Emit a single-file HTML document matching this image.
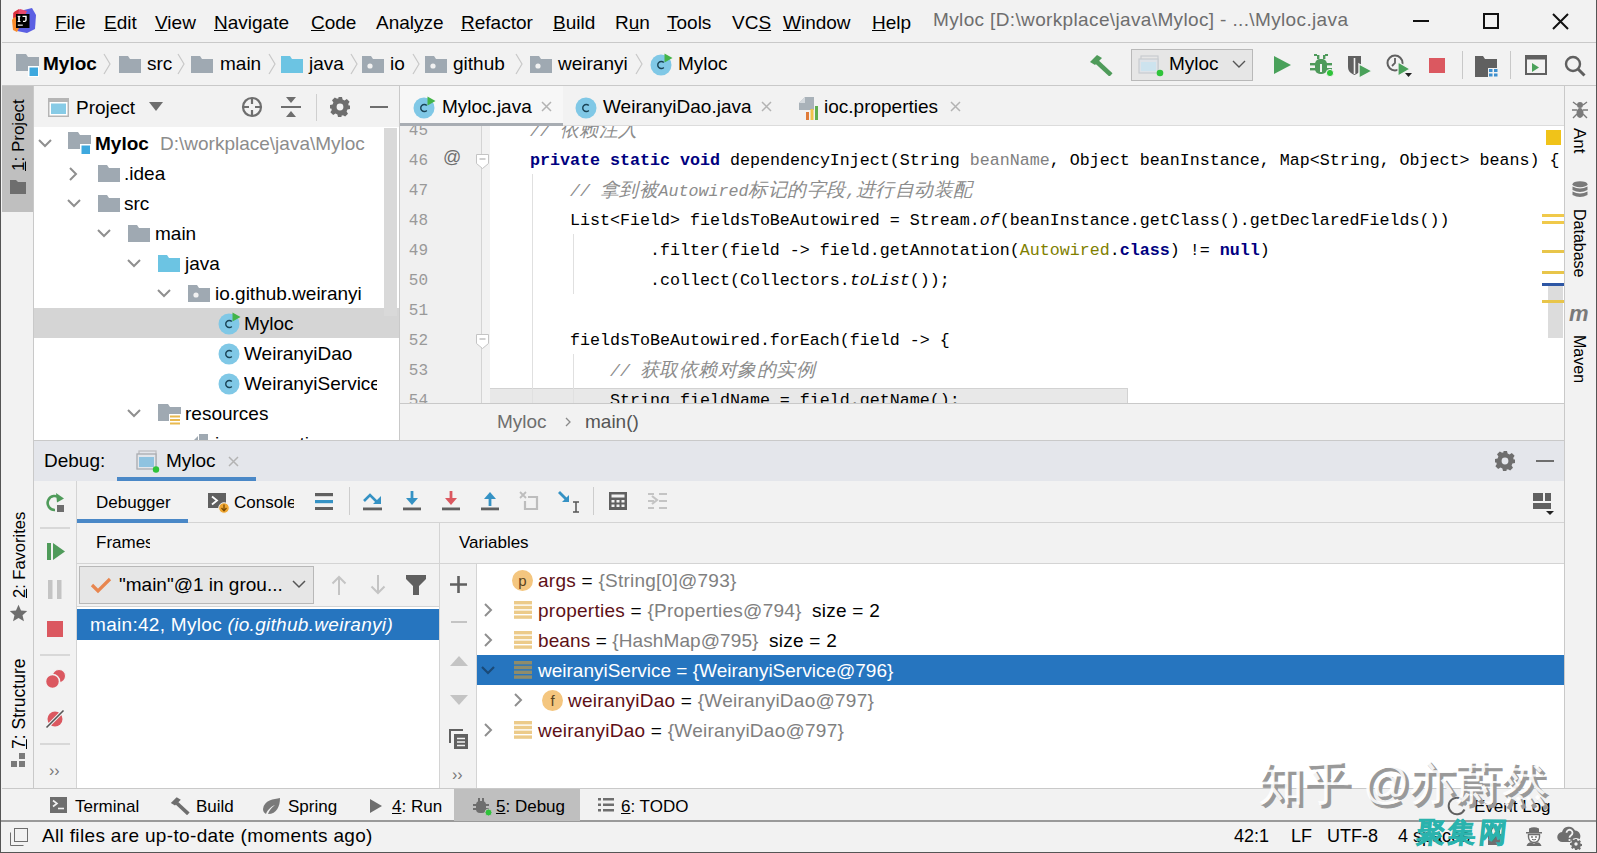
<!DOCTYPE html>
<html><head><meta charset="utf-8">
<style>
*{margin:0;padding:0;box-sizing:border-box}
html,body{width:1597px;height:853px;overflow:hidden;background:#f2f2f2}
body{position:relative;font-family:"Liberation Sans",sans-serif;font-size:19px;color:#000}
.a{position:absolute}
.t{position:absolute;white-space:pre;line-height:22px;font-size:19px}
.m{font-family:"Liberation Mono",monospace;font-size:16.67px;line-height:22px;white-space:pre;position:absolute}
.b{position:absolute;background:#c9c9c9}
u{text-decoration:underline;text-underline-offset:1px;text-decoration-thickness:1px}
</style></head><body>

<svg width="0" height="0" style="position:absolute">
<defs>
<symbol id="fold" viewBox="0 0 22 18"><path d="M0 1h9l2 3h11v14H0z" fill="#9fa9b2"/></symbol>
<symbol id="foldj" viewBox="0 0 22 18"><path d="M0 1h9l2 3h11v14H0z" fill="#6cc4e3"/></symbol>
<symbol id="pkg" viewBox="0 0 22 18"><path d="M0 1h9l2 3h11v14H0z" fill="#9fa9b2"/><circle cx="8" cy="11" r="2.6" fill="#f2f2f2"/></symbol>
<symbol id="modf" viewBox="0 0 24 24"><path d="M0 1h10l2 3h11v14H0z" fill="#9fa9b2"/><rect x="12" y="13" width="11" height="11" fill="#fff"/><rect x="13.5" y="14.5" width="8.5" height="8.5" fill="#3ea8de"/></symbol>
<symbol id="cls" viewBox="0 0 22 22"><circle cx="11" cy="11" r="10.5" fill="#80c8e6"/><path d="M13.8 8.6a3.5 3.5 0 1 0 0 4.8" fill="none" stroke="#1a4456" stroke-width="1.4"/></symbol>
<symbol id="clsr" viewBox="0 0 24 24"><circle cx="11" cy="13" r="10.5" fill="#80c8e6"/><path d="M13.8 10.6a3.5 3.5 0 1 0 0 4.8" fill="none" stroke="#1a4456" stroke-width="1.4"/><path d="M14.5 1.5l8 4.5-8 4.5z" fill="#44b449"/></symbol>
<symbol id="chev" viewBox="0 0 8 22"><path d="M1 1l6 10-6 10" fill="none" stroke="#c8c8c8" stroke-width="1.2"/></symbol>
</defs></svg>
<!-- window left border -->
<div class="a" style="left:0;top:0;width:1px;height:853px;background:#555"></div>

<!-- ===== MENU BAR ===== -->
<div id="menubar" class="a" style="left:1px;top:0;width:1595px;height:42px;background:#f2f2f2"></div>
<div class="b" style="left:2px;top:42px;width:1595px;height:1px"></div>

<!-- IJ logo -->
<svg class="a" style="left:11px;top:8px" width="26" height="26" viewBox="0 0 26 26">
<polygon points="13,2 21,0 25,7 24,21 16,25 6,23 9,10" fill="#5b5fe3"/>
<polygon points="2,5 9,1 16,3 11,14 3,15" fill="#e84a6f"/>
<polygon points="1,12 4,8 8,20 6,24 2,22" fill="#f98b2a"/>
<polygon points="3,4 8,1 7,8 2,10" fill="#d8313b"/>
<rect x="5" y="6" width="13.5" height="14" fill="#000"/>
<rect x="7.2" y="8" width="1.6" height="5.5" fill="#fff"/><rect x="6.6" y="7.8" width="2.8" height="1" fill="#fff"/><rect x="6.6" y="13" width="2.8" height="1" fill="#fff"/>
<path d="M11.5 7.8h4.2v4.3a1.8 1.8 0 0 1-1.8 1.8h-1.9v-1.2h1.7a.6.6 0 0 0 .6-.6v-3.1h-2.8z" fill="#fff"/>
<rect x="6.8" y="16.6" width="5" height="1.1" fill="#fff"/>
</svg>
<div class="t" style="left:55px;top:12px"><u>F</u>ile</div>
<div class="t" style="left:104px;top:12px"><u>E</u>dit</div>
<div class="t" style="left:155px;top:12px"><u>V</u>iew</div>
<div class="t" style="left:214px;top:12px"><u>N</u>avigate</div>
<div class="t" style="left:311px;top:12px"><u>C</u>ode</div>
<div class="t" style="left:376px;top:12px">Anal<u>y</u>ze</div>
<div class="t" style="left:461px;top:12px"><u>R</u>efactor</div>
<div class="t" style="left:553px;top:12px"><u>B</u>uild</div>
<div class="t" style="left:615px;top:12px">R<u>u</u>n</div>
<div class="t" style="left:667px;top:12px"><u>T</u>ools</div>
<div class="t" style="left:732px;top:12px">VC<u>S</u></div>
<div class="t" style="left:783px;top:12px"><u>W</u>indow</div>
<div class="t" style="left:872px;top:12px"><u>H</u>elp</div>
<div class="t" style="left:933px;top:9px;color:#6e6e6e;letter-spacing:0.36px">Myloc [D:\workplace\java\Myloc] - ...\Myloc.java</div>
<!-- window controls -->
<div class="a" style="left:1413px;top:20px;width:16px;height:2px;background:#111"></div>
<div class="a" style="left:1483px;top:13px;width:16px;height:16px;border:2px solid #111"></div>
<svg class="a" style="left:1552px;top:13px" width="17" height="17" viewBox="0 0 17 17"><path d="M1 1L16 16M16 1L1 16" stroke="#111" stroke-width="2"/></svg>


<!-- ===== NAV BAR ===== -->
<div id="navbar" class="a" style="left:2px;top:43px;width:1595px;height:43px;background:#f2f2f2"></div>
<div class="b" style="left:2px;top:85px;width:1595px;height:1px"></div>

<svg class="a" style="left:16px;top:53px" width="24" height="24"><use href="#modf"/></svg>
<div class="t" style="left:43px;top:53px;font-weight:bold">Myloc</div>
<svg class="a" style="left:103px;top:53px" width="8" height="22"><use href="#chev"/></svg>
<svg class="a" style="left:119px;top:55px" width="22" height="18"><use href="#fold"/></svg>
<div class="t" style="left:147px;top:53px">src</div>
<svg class="a" style="left:177px;top:53px" width="8" height="22"><use href="#chev"/></svg>
<svg class="a" style="left:191px;top:55px" width="22" height="18"><use href="#fold"/></svg>
<div class="t" style="left:220px;top:53px">main</div>
<svg class="a" style="left:268px;top:53px" width="8" height="22"><use href="#chev"/></svg>
<svg class="a" style="left:281px;top:55px" width="22" height="18"><use href="#foldj"/></svg>
<div class="t" style="left:309px;top:53px">java</div>
<svg class="a" style="left:350px;top:53px" width="8" height="22"><use href="#chev"/></svg>
<svg class="a" style="left:362px;top:55px" width="22" height="18"><use href="#pkg"/></svg>
<div class="t" style="left:390px;top:53px">io</div>
<svg class="a" style="left:412px;top:53px" width="8" height="22"><use href="#chev"/></svg>
<svg class="a" style="left:425px;top:55px" width="22" height="18"><use href="#pkg"/></svg>
<div class="t" style="left:453px;top:53px">github</div>
<svg class="a" style="left:515px;top:53px" width="8" height="22"><use href="#chev"/></svg>
<svg class="a" style="left:530px;top:55px" width="22" height="18"><use href="#pkg"/></svg>
<div class="t" style="left:558px;top:53px">weiranyi</div>
<svg class="a" style="left:635px;top:53px" width="8" height="22"><use href="#chev"/></svg>
<svg class="a" style="left:650px;top:52px" width="24" height="24"><use href="#clsr"/></svg>
<div class="t" style="left:678px;top:53px">Myloc</div>
<!-- toolbar right -->
<svg class="a" style="left:1089px;top:54px" width="24" height="22" viewBox="0 0 24 22"><path d="M1 8L8 1l5 3-7 7z" fill="#4f9b5a"/><path d="M8 8l14 13" stroke="#4f9b5a" stroke-width="4.5"/></svg>
<div class="a" style="left:1131px;top:49px;width:122px;height:32px;background:#e6e6e6;border:1px solid #b9b9b9"></div>
<svg class="a" style="left:1138px;top:55px" width="26" height="22" viewBox="0 0 26 22"><rect x="3" y="1" width="17" height="13" fill="none" stroke="#c9ccd0" stroke-width="1.2"/><rect x="1" y="4" width="19" height="14" fill="#dfe3e8" stroke="#c9ccd0" stroke-width="1.2"/><rect x="3" y="7" width="15" height="9" fill="#cde3ee"/><circle cx="22" cy="18" r="3.3" fill="#2fc33a"/></svg>
<div class="t" style="left:1169px;top:53px">Myloc</div>
<svg class="a" style="left:1232px;top:60px" width="14" height="9" viewBox="0 0 14 9"><path d="M1 1l6 6 6-6" fill="none" stroke="#555" stroke-width="1.4"/></svg>
<svg class="a" style="left:1274px;top:56px" width="17" height="18" viewBox="0 0 17 18"><path d="M0 0l17 9-17 9z" fill="#49a15a"/></svg>
<svg class="a" style="left:1309px;top:52px" width="26" height="26" viewBox="0 0 26 26"><g fill="#4e9a5b"><rect x="6" y="7" width="12" height="15" rx="5"/><rect x="1" y="11" width="22" height="2.4"/><rect x="1" y="16" width="22" height="2.4"/><rect x="8" y="3" width="2.4" height="4"/><rect x="14" y="3" width="2.4" height="4"/><rect x="5" y="2" width="3" height="2"/><rect x="16" y="2" width="3" height="2"/></g><rect x="11" y="12" width="2" height="8" fill="#f2f2f2"/><circle cx="21" cy="21" r="3.6" fill="#2fc33a" stroke="#f2f2f2" stroke-width="1"/></svg>
<svg class="a" style="left:1347px;top:54px" width="26" height="24" viewBox="0 0 26 24"><path d="M1 2h13v11c0 5-4 7-6.5 8C5 20 1 18 1 13z" fill="#606060"/><path d="M7.5 4v16" stroke="#f2f2f2" stroke-width="1.6"/><path d="M12 10l13 7-13 7z" fill="#4aa15a" stroke="#f2f2f2" stroke-width="1.4"/></svg>
<svg class="a" style="left:1386px;top:53px" width="27" height="25" viewBox="0 0 27 25"><circle cx="9" cy="10" r="7.5" fill="none" stroke="#606060" stroke-width="2"/><path d="M9 5v5l-3 3" fill="none" stroke="#606060" stroke-width="1.8"/><path d="M12 9l12 7-12 7z" fill="#4aa15a" stroke="#f2f2f2" stroke-width="1.2"/><path d="M19 20h7l-3.5 4z" fill="#222"/></svg>
<div class="a" style="left:1429px;top:58px;width:16px;height:15px;background:#db5860"></div>
<div class="a" style="left:1462px;top:51px;width:1px;height:28px;background:#c8c8c8"></div>
<svg class="a" style="left:1475px;top:55px" width="24" height="22" viewBox="0 0 24 22"><path d="M0 1h8l2 3h12v9h-9v9H0z" fill="#606060"/><g fill="#3d8fcf"><rect x="14" y="14" width="3.5" height="3"/><rect x="19" y="14" width="3.5" height="3"/><rect x="14" y="18.5" width="3.5" height="3"/><rect x="19" y="18.5" width="3.5" height="3"/></g></svg>
<div class="a" style="left:1510px;top:51px;width:1px;height:28px;background:#c8c8c8"></div>
<svg class="a" style="left:1525px;top:55px" width="22" height="20" viewBox="0 0 22 20"><rect x="1" y="1" width="20" height="18" fill="none" stroke="#606060" stroke-width="2"/><rect x="1" y="1" width="20" height="3.5" fill="#606060"/><path d="M7 8l7 4.5-7 4.5z" fill="#4aa15a"/></svg>
<svg class="a" style="left:1564px;top:55px" width="22" height="22" viewBox="0 0 22 22"><circle cx="9" cy="9" r="7" fill="none" stroke="#606060" stroke-width="2.4"/><path d="M14 14l6.5 6.5" stroke="#606060" stroke-width="3"/></svg>


<!-- ===== LEFT STRIPE ===== -->
<div class="a" style="left:2px;top:86px;width:31px;height:702px;background:#f2f2f2"></div>
<div class="b" style="left:33px;top:86px;width:1px;height:702px"></div>

<!-- ===== PROJECT PANEL ===== -->
<div class="a" style="left:34px;top:86px;width:365px;height:41px;background:#f2f2f2"></div>
<div class="a" style="left:34px;top:127px;width:365px;height:313px;background:#fff"></div>
<div class="b" style="left:399px;top:86px;width:1px;height:354px"></div>


<!-- left stripe: project tab -->
<div class="a" style="left:2px;top:86px;width:31px;height:126px;background:#bfbfbf"></div>
<div class="t" style="left:8px;top:171px;transform:rotate(-90deg);transform-origin:0 0;font-size:17px"><u>1</u>: Project</div>
<svg class="a" style="left:10px;top:180px" width="16" height="14" viewBox="0 0 16 14"><path d="M0 0h6l2 2h8v12H0z" fill="#6e6e6e"/></svg>
<!-- project header -->
<svg class="a" style="left:48px;top:98px" width="21" height="19" viewBox="0 0 21 19"><rect x="0" y="0" width="21" height="19" fill="#b5b5b5"/><rect x="1.5" y="4" width="18" height="13.5" fill="#fff"/><rect x="3" y="5.5" width="15" height="10.5" fill="#87cbe6"/></svg>
<div class="t" style="left:76px;top:97px">Project</div>
<svg class="a" style="left:149px;top:102px" width="14" height="9" viewBox="0 0 14 9"><path d="M0 0h14l-7 9z" fill="#6e6e6e"/></svg>
<svg class="a" style="left:241px;top:96px" width="22" height="22" viewBox="0 0 22 22"><circle cx="11" cy="11" r="9" fill="none" stroke="#6e6e6e" stroke-width="2.2"/><path d="M11 2v6M11 14v6M2 11h6M14 11h6" stroke="#6e6e6e" stroke-width="2.2"/></svg>
<svg class="a" style="left:281px;top:96px" width="20" height="22" viewBox="0 0 20 22"><path d="M0 11h20" stroke="#6e6e6e" stroke-width="2"/><path d="M5 1h10l-5 6z M5 21h10l-5-6z" fill="#6e6e6e"/></svg>
<div class="a" style="left:316px;top:94px;width:1px;height:27px;background:#cfcfcf"></div>
<svg class="a" style="left:330px;top:97px" width="20" height="20" viewBox="0 0 20 20"><path fill="#6e6e6e" fill-rule="evenodd" d="M8 0h4l.6 2.6 1.9.8 2.3-1.4 2.8 2.8-1.4 2.3.8 1.9L20 8v4l-2.6.6-.8 1.9 1.4 2.3-2.8 2.8-2.3-1.4-1.9.8L12 20H8l-.6-2.6-1.9-.8-2.3 1.4-2.8-2.8 1.4-2.3-.8-1.9L0 12V8l2.6-.6.8-1.9L2 3.2 4.8.4l2.3 1.4 1.9-.8zM10 6.6a3.4 3.4 0 1 0 0 6.8 3.4 3.4 0 0 0 0-6.8z"/></svg>
<div class="a" style="left:370px;top:106px;width:18px;height:2px;background:#6e6e6e"></div>
<!-- tree -->
<div class="a" style="left:34px;top:308px;width:365px;height:30px;background:#d5d5d5"></div>
<div class="a" style="left:384px;top:128px;width:13px;height:188px;background:#d9d9d9"></div>
<svg width="0" height="0" style="position:absolute"><defs>
<symbol id="cd" viewBox="0 0 14 9"><path d="M1 1l6 6 6-6" fill="none" stroke="#8f8f8f" stroke-width="2"/></symbol>
<symbol id="cr" viewBox="0 0 9 14"><path d="M1 1l6 6-6 6" fill="none" stroke="#8f8f8f" stroke-width="2"/></symbol>
<symbol id="resf" viewBox="0 0 24 24"><path d="M0 1h10l2 3h11v14H0z" fill="#9fa9b2"/><rect x="11" y="11" width="12" height="13" fill="#fff"/><g fill="#e9b94f"><rect x="12" y="12.5" width="10" height="2"/><rect x="12" y="16" width="10" height="2"/><rect x="12" y="19.5" width="10" height="2"/></g></symbol>
</defs></svg>
<svg class="a" style="left:38px;top:139px" width="14" height="9"><use href="#cd"/></svg>
<svg class="a" style="left:68px;top:131px" width="24" height="24"><use href="#modf"/></svg>
<div class="t" style="left:95px;top:133px;font-weight:bold">Myloc</div>
<div class="t" style="left:160px;top:133px;color:#8c8c8c">D:\workplace\java\Myloc</div>
<svg class="a" style="left:69px;top:167px" width="9" height="14"><use href="#cr"/></svg>
<svg class="a" style="left:98px;top:164px" width="22" height="18"><use href="#fold"/></svg>
<div class="t" style="left:124px;top:163px">.idea</div>
<svg class="a" style="left:67px;top:199px" width="14" height="9"><use href="#cd"/></svg>
<svg class="a" style="left:98px;top:194px" width="22" height="18"><use href="#fold"/></svg>
<div class="t" style="left:124px;top:193px">src</div>
<svg class="a" style="left:97px;top:229px" width="14" height="9"><use href="#cd"/></svg>
<svg class="a" style="left:128px;top:224px" width="22" height="18"><use href="#fold"/></svg>
<div class="t" style="left:155px;top:223px">main</div>
<svg class="a" style="left:127px;top:259px" width="14" height="9"><use href="#cd"/></svg>
<svg class="a" style="left:158px;top:254px" width="22" height="18"><use href="#foldj"/></svg>
<div class="t" style="left:185px;top:253px">java</div>
<svg class="a" style="left:157px;top:289px" width="14" height="9"><use href="#cd"/></svg>
<svg class="a" style="left:188px;top:284px" width="22" height="18"><use href="#pkg"/></svg>
<div class="t" style="left:215px;top:283px">io.github.weiranyi</div>
<svg class="a" style="left:218px;top:311px" width="24" height="24"><use href="#clsr"/></svg>
<div class="t" style="left:244px;top:313px">Myloc</div>
<svg class="a" style="left:218px;top:343px" width="22" height="22"><use href="#cls"/></svg>
<div class="t" style="left:244px;top:343px">WeiranyiDao</div>
<svg class="a" style="left:218px;top:373px" width="22" height="22"><use href="#cls"/></svg>
<div class="a" style="left:244px;top:373px;width:133px;height:22px;overflow:hidden"><div class="t" style="left:0;top:0">WeiranyiService</div></div>
<svg class="a" style="left:127px;top:409px" width="14" height="9"><use href="#cd"/></svg>
<svg class="a" style="left:158px;top:403px" width="24" height="24"><use href="#resf"/></svg>
<div class="t" style="left:185px;top:403px">resources</div>
<div class="a" style="left:34px;top:433px;width:349px;height:7px;overflow:hidden"><svg class="a" style="left:156px;top:-1px" width="22" height="20" viewBox="0 0 22 20"><path d="M4 8l4-4v4z" fill="#9fa9b2"/><rect x="9" y="2" width="9" height="8" fill="#9fa9b2"/></svg><div class="t" style="left:181px;top:0px;font-size:19px">ioc.properties</div></div>

<!-- ===== EDITOR ===== -->
<div class="a" style="left:400px;top:86px;width:1165px;height:40px;background:#f2f2f2"></div>
<div class="a" style="left:400px;top:126px;width:82px;height:278px;background:#f0f0f0"></div>
<div class="a" style="left:490px;top:126px;width:1075px;height:278px;background:#fff"></div>
<div class="a" style="left:400px;top:404px;width:1165px;height:36px;background:#f2f2f2"></div>
<div class="b" style="left:400px;top:403px;width:1165px;height:1px"></div>


<style>
.cl{line-height:30px;height:30px;color:#000}
.ln{line-height:30px;height:30px;color:#999;font-size:16px}
.cj{font-size:19px;letter-spacing:0.5px}
.m b{font-weight:bold}
</style>
<!-- tabs -->
<div class="a" style="left:400px;top:86px;width:163px;height:37px;background:#f7f7f7"></div>
<div class="a" style="left:400px;top:123px;width:163px;height:3px;background:#a8adb3"></div>
<div class="a" style="left:563px;top:125px;width:1002px;height:1px;background:#dcdcdc"></div>
<svg class="a" style="left:413px;top:95px" width="24" height="24"><use href="#clsr"/></svg>
<div class="t" style="left:442px;top:96px">Myloc.java</div>
<svg class="a" style="left:541px;top:101px" width="11" height="11" viewBox="0 0 11 11"><path d="M1 1l9 9M10 1l-9 9" stroke="#b3b3b3" stroke-width="1.5"/></svg>
<svg class="a" style="left:575px;top:97px" width="22" height="22"><use href="#cls"/></svg>
<div class="t" style="left:603px;top:96px">WeiranyiDao.java</div>
<svg class="a" style="left:761px;top:101px" width="11" height="11" viewBox="0 0 11 11"><path d="M1 1l9 9M10 1l-9 9" stroke="#b3b3b3" stroke-width="1.5"/></svg>
<svg class="a" style="left:799px;top:97px" width="20" height="23" viewBox="0 0 20 23"><path d="M0 6l6-6h9v13H0z" fill="#a9b2b9"/><path d="M0 6h6V0z" fill="#d5dade"/><rect x="7" y="15" width="3" height="8" fill="#e07b39"/><rect x="11.5" y="12" width="3" height="11" fill="#f0c24a"/><rect x="16" y="9" width="3" height="14" fill="#5fad4e"/></svg>
<div class="t" style="left:824px;top:96px">ioc.properties</div>
<svg class="a" style="left:950px;top:101px" width="11" height="11" viewBox="0 0 11 11"><path d="M1 1l9 9M10 1l-9 9" stroke="#b3b3b3" stroke-width="1.5"/></svg>
<!-- code area -->
<div class="a" style="left:400px;top:126px;width:1164px;height:277px;overflow:hidden">
<div class="a" style="left:0;top:0;width:82px;height:277px;background:#f0f0f0"></div>
<div class="a" style="left:81px;top:0;width:1px;height:277px;background:#d4d4d4"></div>
<div class="a" style="left:90px;top:262px;width:638px;height:20px;background:#e8e8e8;border-top:1px solid #d2d2d2;border-right:1px solid #d2d2d2"></div>
<div class="a" style="left:132px;top:48px;width:1px;height:240px;background:#e0e0e0"></div>
<div class="a" style="left:173px;top:108px;width:1px;height:60px;background:#e0e0e0"></div>
<div class="a" style="left:173px;top:228px;width:1px;height:60px;background:#e0e0e0"></div>
<div class="m cl" style="left:90px;top:-10px">    <i style="color:#8c8c8c">// <span class="cj">依赖注入</span></i></div>
<div class="m ln" style="left:0;top:-10px;width:28px;text-align:right">45</div>
<div class="m cl" style="left:90px;top:20px">    <b style="color:#000080">private</b> <b style="color:#000080">static</b> <b style="color:#000080">void</b> dependencyInject(String <span style="color:#808080">beanName</span>, Object beanInstance, Map&lt;String, Object&gt; beans) {</div>
<div class="m ln" style="left:0;top:20px;width:28px;text-align:right">46</div>
<div class="m cl" style="left:90px;top:50px">        <i style="color:#8c8c8c">// <span class="cj">拿到被</span>Autowired<span class="cj">标记的字段</span>,<span class="cj">进行自动装配</span></i></div>
<div class="m ln" style="left:0;top:50px;width:28px;text-align:right">47</div>
<div class="m cl" style="left:90px;top:80px">        List&lt;Field&gt; fieldsToBeAutowired = Stream.<i>of</i>(beanInstance.getClass().getDeclaredFields())</div>
<div class="m ln" style="left:0;top:80px;width:28px;text-align:right">48</div>
<div class="m cl" style="left:90px;top:110px">                .filter(field -&gt; field.getAnnotation(<span style="color:#808000">Autowired</span>.<b style="color:#000080">class</b>) != <b style="color:#000080">null</b>)</div>
<div class="m ln" style="left:0;top:110px;width:28px;text-align:right">49</div>
<div class="m cl" style="left:90px;top:140px">                .collect(Collectors.<i>toList</i>());</div>
<div class="m ln" style="left:0;top:140px;width:28px;text-align:right">50</div>
<div class="m cl" style="left:90px;top:170px"></div>
<div class="m ln" style="left:0;top:170px;width:28px;text-align:right">51</div>
<div class="m cl" style="left:90px;top:200px">        fieldsToBeAutowired.forEach(field -&gt; {</div>
<div class="m ln" style="left:0;top:200px;width:28px;text-align:right">52</div>
<div class="m cl" style="left:90px;top:230px">            <i style="color:#8c8c8c">// <span class="cj">获取依赖对象的实例</span></i></div>
<div class="m ln" style="left:0;top:230px;width:28px;text-align:right">53</div>
<div class="m cl" style="left:90px;top:260px">            String fieldName = field.getName();</div>
<div class="m ln" style="left:0;top:260px;width:28px;text-align:right">54</div>
<div class="t" style="left:43px;top:20px;color:#6e6e6e;font-size:18px">@</div>
<svg class="a" style="left:76px;top:28px" width="13" height="15" viewBox="0 0 13 15"><path d="M.5 .5h12v9l-6 5-6-5z" fill="#fff" stroke="#c4c4c4"/><path d="M3.5 5h6" stroke="#b0b0b0" stroke-width="1.2"/></svg>
<svg class="a" style="left:76px;top:208px" width="13" height="15" viewBox="0 0 13 15"><path d="M.5 .5h12v9l-6 5-6-5z" fill="#fff" stroke="#c4c4c4"/><path d="M3.5 5h6" stroke="#b0b0b0" stroke-width="1.2"/></svg>
<!-- error stripe -->
<div class="a" style="left:1148px;top:160px;width:15px;height:52px;background:#dcdcdc"></div>
<div class="a" style="left:1146px;top:4px;width:15px;height:15px;background:#f0c319"></div>
<div class="a" style="left:1142px;top:88px;width:22px;height:3px;background:#f0c94a"></div>
<div class="a" style="left:1142px;top:95px;width:22px;height:3px;background:#f0c94a"></div>
<div class="a" style="left:1142px;top:124px;width:22px;height:3px;background:#e8c54a"></div>
<div class="a" style="left:1142px;top:145px;width:22px;height:3px;background:#e8c54a"></div>
<div class="a" style="left:1142px;top:157px;width:22px;height:3px;background:#2d56a4"></div>
<div class="a" style="left:1142px;top:174px;width:22px;height:3px;background:#e8c54a"></div>
</div>
<!-- breadcrumbs -->
<div class="t" style="left:497px;top:411px;color:#6e6e6e">Myloc</div>
<svg class="a" style="left:565px;top:417px" width="6" height="10" viewBox="0 0 6 10"><path d="M1 1l4 4-4 4" fill="none" stroke="#8a8a8a" stroke-width="1.3"/></svg>
<div class="t" style="left:585px;top:411px;color:#555">main()</div>

<!-- ===== RIGHT STRIPE ===== -->
<div class="a" style="left:1565px;top:86px;width:32px;height:702px;background:#f2f2f2"></div>
<div class="b" style="left:1564px;top:86px;width:1px;height:702px"></div>

<!-- ===== DEBUG PANEL ===== -->
<div class="b" style="left:34px;top:440px;width:1531px;height:1px"></div>
<div class="a" style="left:34px;top:441px;width:1530px;height:40px;background:#e4e6eb"></div>
<div class="a" style="left:34px;top:481px;width:1530px;height:307px;background:#f2f2f2"></div>


<svg class="a" style="left:1572px;top:101px" width="16" height="18" viewBox="0 0 16 18"><g fill="#7a7a7a"><ellipse cx="8" cy="4" rx="3" ry="3"/><ellipse cx="8" cy="12" rx="3.5" ry="5"/></g><path d="M1 1l4 3M15 1l-4 3M0 9h5M16 9h-5M1 17l4-4M15 17l-4-4" stroke="#7a7a7a" stroke-width="1.4"/></svg>
<div class="t" style="left:1590px;top:128px;transform:rotate(90deg);transform-origin:0 0;font-size:17px">Ant</div>
<svg class="a" style="left:1572px;top:181px" width="16" height="18" viewBox="0 0 16 18"><g fill="#7a7a7a"><ellipse cx="8" cy="3.2" rx="7.5" ry="3"/><path d="M.5 5.6Q8 9.5 15.5 5.6V9Q8 12.9 .5 9z"/><path d="M.5 10.6Q8 14.5 15.5 10.6V14Q8 17.9 .5 14z"/></g></svg>
<div class="t" style="left:1590px;top:209px;transform:rotate(90deg);transform-origin:0 0;font-size:16px">Database</div>
<div class="t" style="left:1569px;top:303px;font-size:22px;font-weight:bold;font-style:italic;color:#7a7a7a">m</div>
<div class="t" style="left:1590px;top:335px;transform:rotate(90deg);transform-origin:0 0;font-size:16px">Maven</div>

<!-- debug header -->
<div class="t" style="left:44px;top:450px">Debug:</div>
<svg class="a" style="left:136px;top:450px" width="24" height="23" viewBox="0 0 24 23"><rect x="3" y="1" width="17" height="14" fill="none" stroke="#bdbfc2" stroke-width="1.3"/><rect x="1" y="4" width="19" height="15" fill="#e3e6eb" stroke="#a9acb0" stroke-width="1.3"/><rect x="3" y="7" width="15" height="10" fill="#8fc3e0"/><circle cx="20" cy="19.5" r="3.2" fill="#2fc33a"/></svg>
<div class="t" style="left:166px;top:450px">Myloc</div>
<svg class="a" style="left:228px;top:456px" width="11" height="11" viewBox="0 0 11 11"><path d="M1 1l9 9M10 1l-9 9" stroke="#b3b3b3" stroke-width="1.5"/></svg>
<div class="a" style="left:117px;top:477px;width:139px;height:4px;background:#4a88c7"></div>
<svg class="a" style="left:1495px;top:451px" width="20" height="20" viewBox="0 0 20 20"><path fill="#6e6e6e" fill-rule="evenodd" d="M8 0h4l.6 2.6 1.9.8 2.3-1.4 2.8 2.8-1.4 2.3.8 1.9L20 8v4l-2.6.6-.8 1.9 1.4 2.3-2.8 2.8-2.3-1.4-1.9.8L12 20H8l-.6-2.6-1.9-.8-2.3 1.4-2.8-2.8 1.4-2.3-.8-1.9L0 12V8l2.6-.6.8-1.9L2 3.2 4.8.4l2.3 1.4 1.9-.8zM10 6.6a3.4 3.4 0 1 0 0 6.8 3.4 3.4 0 0 0 0-6.8z"/></svg>
<div class="a" style="left:1536px;top:460px;width:18px;height:2px;background:#6e6e6e"></div>
<!-- left action column -->
<div class="a" style="left:76px;top:481px;width:1px;height:307px;background:#d4d4d4"></div>
<svg class="a" style="left:45px;top:493px" width="22" height="20" viewBox="0 0 22 20"><path d="M15 5.5A7 7 0 1 0 10 17" fill="none" stroke="#4f9b5a" stroke-width="2.6"/><path d="M11 0l8 5.5-7 4z" fill="#4f9b5a"/><rect x="12" y="12" width="7" height="7" fill="#6e6e6e"/></svg>
<div class="a" style="left:40px;top:527px;width:30px;height:2px;background:#d8d8d8"></div>
<svg class="a" style="left:47px;top:543px" width="18" height="17" viewBox="0 0 18 17"><rect x="0" y="0" width="4" height="17" fill="#4f9b5a"/><path d="M6 0l12 8.5L6 17z" fill="#4f9b5a"/></svg>
<svg class="a" style="left:48px;top:580px" width="14" height="19" viewBox="0 0 14 19"><rect x="0" y="0" width="4.5" height="19" fill="#c4c4c4"/><rect x="9" y="0" width="4.5" height="19" fill="#c4c4c4"/></svg>
<div class="a" style="left:47px;top:621px;width:16px;height:16px;background:#db5860"></div>
<div class="a" style="left:40px;top:654px;width:30px;height:2px;background:#d8d8d8"></div>
<svg class="a" style="left:45px;top:669px" width="21" height="20" viewBox="0 0 21 20"><circle cx="14" cy="7" r="6.5" fill="#db5860" stroke="#f2f2f2" stroke-width="1"/><circle cx="7.5" cy="12.5" r="7" fill="#db5860" stroke="#f2f2f2" stroke-width="1.5"/></svg>
<svg class="a" style="left:45px;top:709px" width="20" height="20" viewBox="0 0 20 20"><circle cx="10" cy="10" r="7.5" fill="#db5860"/><path d="M1.5 18.5l17-17" stroke="#f2f2f2" stroke-width="3.5"/><path d="M1.5 18.5l17-17" stroke="#555" stroke-width="1.6"/></svg>
<div class="a" style="left:40px;top:743px;width:30px;height:2px;background:#d8d8d8"></div>
<div class="t" style="left:49px;top:760px;font-size:16px;color:#777">&#8250;&#8250;</div>
<!-- tabs Debugger / Console -->
<div class="a" style="left:77px;top:522px;width:1487px;height:1px;background:#d4d4d4"></div>
<div class="a" style="left:96px;top:492px;width:75px;height:24px;overflow:hidden"><div class="t" style="left:0;top:0;font-size:17px">Debugger</div></div>
<div class="a" style="left:77px;top:519px;width:111px;height:4px;background:#4a88c7"></div>
<svg class="a" style="left:208px;top:493px" width="22" height="21" viewBox="0 0 22 21"><rect x="0" y="0" width="18" height="15" fill="#606060"/><path d="M4 3.5l5 4-5 4" fill="none" stroke="#fff" stroke-width="1.8"/><circle cx="16" cy="15" r="5.3" fill="#f0a732" stroke="#f2f2f2" stroke-width="1"/><path d="M16 11.5v6M13.5 15l2.5 2.8 2.5-2.8" fill="none" stroke="#7a4a00" stroke-width="1.3"/></svg>
<div class="a" style="left:234px;top:492px;width:60px;height:24px;overflow:hidden"><div class="t" style="left:0;top:0;font-size:17px">Console</div></div>
<svg class="a" style="left:315px;top:493px" width="18" height="17" viewBox="0 0 18 17"><rect y="0" width="18" height="3.2" fill="#606060"/><rect y="7" width="18" height="3.2" fill="#3592c4"/><rect y="14" width="18" height="3.2" fill="#606060"/></svg>
<div class="a" style="left:349px;top:487px;width:1px;height:28px;background:#cdcdcd"></div>
<svg class="a" style="left:362px;top:490px" width="21" height="22" viewBox="0 0 21 22"><path d="M2 11l6-6 7 7" fill="none" stroke="#3592c4" stroke-width="2.6"/><path d="M11 14h8V6z" fill="#3592c4"/><rect x="1" y="17.5" width="19" height="2.8" fill="#606060"/></svg>
<svg class="a" style="left:402px;top:490px" width="20" height="22" viewBox="0 0 20 22"><path d="M10 1v10" stroke="#3592c4" stroke-width="2.8"/><path d="M4 8h12l-6 7z" fill="#3592c4"/><rect x="1" y="17.5" width="18" height="2.8" fill="#606060"/></svg>
<svg class="a" style="left:441px;top:490px" width="20" height="22" viewBox="0 0 20 22"><path d="M10 1v10" stroke="#db5860" stroke-width="2.8"/><path d="M4 8h12l-6 7z" fill="#db5860"/><rect x="1" y="17.5" width="18" height="2.8" fill="#606060"/></svg>
<svg class="a" style="left:480px;top:490px" width="20" height="22" viewBox="0 0 20 22"><path d="M10 6v10" stroke="#3592c4" stroke-width="2.8"/><path d="M4 9h12l-6-7z" fill="#3592c4"/><rect x="1" y="17.5" width="18" height="2.8" fill="#606060"/></svg>
<svg class="a" style="left:519px;top:491px" width="20" height="20" viewBox="0 0 20 20"><path d="M1 1l6 6M7 1l-6 6" stroke="#bdbdbd" stroke-width="1.8"/><path d="M9 6h9v12H6v-8" fill="none" stroke="#bdbdbd" stroke-width="2.2"/></svg>
<svg class="a" style="left:557px;top:490px" width="24" height="24" viewBox="0 0 24 24"><path d="M2 2l9 9" stroke="#3592c4" stroke-width="2.8"/><path d="M12 5v7H5z" fill="#3592c4"/><path d="M16 12h6M19 12v10M16 22h6" stroke="#555" stroke-width="1.5"/></svg>
<div class="a" style="left:593px;top:487px;width:1px;height:28px;background:#cdcdcd"></div>
<svg class="a" style="left:609px;top:492px" width="18" height="18" viewBox="0 0 18 18"><rect x="0" y="0" width="18" height="18" fill="#606060"/><rect x="2.5" y="2.5" width="13" height="3" fill="#f2f2f2"/><g fill="#f2f2f2"><rect x="2.5" y="8" width="3" height="2.5"/><rect x="7.5" y="8" width="3" height="2.5"/><rect x="12.5" y="8" width="3" height="2.5"/><rect x="2.5" y="12.5" width="3" height="2.5"/><rect x="7.5" y="12.5" width="3" height="2.5"/><rect x="12.5" y="12.5" width="3" height="2.5"/></g></svg>
<svg class="a" style="left:648px;top:492px" width="19" height="18" viewBox="0 0 19 18"><g stroke="#c4c4c4" stroke-width="2.2" fill="none"><path d="M0 2h6M0 9h6M0 16h6M11 2h8M11 9h8M11 16h8M4 4l5 4-5 4"/></g></svg>
<svg class="a" style="left:1533px;top:493px" width="21" height="22" viewBox="0 0 21 22"><rect x="0" y="0" width="10" height="8" fill="#606060"/><rect x="12" y="0" width="6" height="8" fill="#606060"/><rect x="0" y="10" width="18" height="6" fill="#606060"/><path d="M13 18h8l-4 4z" fill="#222"/></svg>
<!-- frames pane -->
<div class="a" style="left:439px;top:523px;width:1px;height:265px;background:#d4d4d4"></div>
<div class="a" style="left:77px;top:563px;width:1487px;height:1px;background:#d4d4d4"></div>
<div class="a" style="left:96px;top:532px;width:54px;height:24px;overflow:hidden"><div class="t" style="left:0;top:0;font-size:17px">Frames</div></div>
<div class="t" style="left:459px;top:532px;font-size:17px">Variables</div>
<div class="a" style="left:79px;top:566px;width:235px;height:38px;background:#e6e6e6;border:1px solid #b8b8b8"></div>
<svg class="a" style="left:90px;top:577px" width="22" height="17" viewBox="0 0 22 17"><path d="M2 8l6 6L20 2" fill="none" stroke="#e8864f" stroke-width="3.2"/></svg>
<div class="a" style="left:119px;top:574px;width:170px;height:24px;overflow:hidden"><div class="t" style="left:0;top:0">"main"@1 in grou...</div></div>
<svg class="a" style="left:292px;top:580px" width="14" height="9" viewBox="0 0 14 9"><path d="M1 1l6 6 6-6" fill="none" stroke="#555" stroke-width="1.5"/></svg>
<svg class="a" style="left:331px;top:575px" width="16" height="20" viewBox="0 0 16 20"><path d="M8 2v18M1.5 8.5L8 2l6.5 6.5" fill="none" stroke="#c4c4c4" stroke-width="2"/></svg>
<svg class="a" style="left:370px;top:575px" width="16" height="20" viewBox="0 0 16 20"><path d="M8 0v18M1.5 11.5L8 18l6.5-6.5" fill="none" stroke="#c4c4c4" stroke-width="2"/></svg>
<svg class="a" style="left:406px;top:575px" width="20" height="20" viewBox="0 0 20 20"><path d="M0 0h20v4l-7 7v9h-6v-9L0 4z" fill="#606060"/></svg>
<div class="a" style="left:77px;top:606px;width:362px;height:1px;background:#d4d4d4"></div>
<div class="a" style="left:77px;top:607px;width:362px;height:181px;background:#fff"></div>
<div class="a" style="left:77px;top:609px;width:362px;height:31px;background:#2675bf"></div>
<div class="t" style="left:90px;top:614px;color:#fff;letter-spacing:0.3px">main:42, Myloc <i>(io.github.weiranyi)</i></div>
<!-- variables pane -->
<div class="a" style="left:477px;top:564px;width:1087px;height:224px;background:#fff"></div>
<div class="a" style="left:476px;top:564px;width:1px;height:224px;background:#d4d4d4"></div>
<svg class="a" style="left:450px;top:576px" width="17" height="17" viewBox="0 0 17 17"><path d="M8.5 0v17M0 8.5h17" stroke="#606060" stroke-width="2.6"/></svg>
<div class="a" style="left:451px;top:621px;width:16px;height:2.4px;background:#c4c4c4"></div>
<svg class="a" style="left:450px;top:656px" width="18" height="10" viewBox="0 0 18 10"><path d="M0 10L9 0l9 10z" fill="#c4c4c4"/></svg>
<svg class="a" style="left:450px;top:695px" width="18" height="10" viewBox="0 0 18 10"><path d="M0 0l9 10 9-10z" fill="#c4c4c4"/></svg>
<svg class="a" style="left:449px;top:729px" width="19" height="20" viewBox="0 0 19 20"><path d="M1 14V1h13" fill="none" stroke="#606060" stroke-width="2"/><rect x="5" y="5" width="14" height="15" fill="#606060"/><path d="M8 9.5h8M8 13h8M8 16.5h8" stroke="#f2f2f2" stroke-width="1.5"/></svg>
<div class="t" style="left:452px;top:764px;font-size:16px;color:#777">&#8250;&#8250;</div>


<!-- variables tree -->
<svg width="0" height="0" style="position:absolute"><defs>
<symbol id="stk" viewBox="0 0 18 18"><g fill="#eccb8a"><rect y="0" width="18" height="3.4"/><rect y="4.8" width="18" height="3.4"/><rect y="9.6" width="18" height="3.4"/><rect y="14.4" width="18" height="3.4"/></g></symbol>
<symbol id="stks" viewBox="0 0 18 18"><g fill="#8e8c6a"><rect y="0" width="18" height="3.4"/><rect y="4.8" width="18" height="3.4"/><rect y="9.6" width="18" height="3.4"/><rect y="14.4" width="18" height="3.4"/></g></symbol>
</defs></svg>
<style>.vn{color:#5e1016}.vg{color:#808080}</style>
<svg class="a" style="left:512px;top:570px" width="21" height="21" viewBox="0 0 21 21"><circle cx="10.5" cy="10.5" r="10.5" fill="#f4c67f"/><text x="10.5" y="15.5" text-anchor="middle" font-family="Liberation Sans" font-size="15" fill="#5a4320">p</text></svg>
<div class="t" style="left:538px;top:570px;letter-spacing:0.25px"><span class="vn">args</span> = <span class="vg">{String[0]@793}</span></div>
<svg class="a" style="left:484px;top:603px" width="9" height="14"><use href="#cr"/></svg>
<svg class="a" style="left:514px;top:601px" width="18" height="18"><use href="#stk"/></svg>
<div class="t" style="left:538px;top:600px;letter-spacing:0.25px"><span class="vn">properties</span> = <span class="vg">{Properties@794}</span></div>
<div class="t" style="left:812px;top:600px;letter-spacing:0.25px">size = 2</div>
<svg class="a" style="left:484px;top:633px" width="9" height="14"><use href="#cr"/></svg>
<svg class="a" style="left:514px;top:631px" width="18" height="18"><use href="#stk"/></svg>
<div class="t" style="left:538px;top:630px;letter-spacing:0.1px"><span class="vn">beans</span> = <span class="vg">{HashMap@795}</span></div>
<div class="t" style="left:769px;top:630px;letter-spacing:0.25px">size = 2</div>
<div class="a" style="left:477px;top:655px;width:1087px;height:30px;background:#2675bf"></div>
<svg class="a" style="left:481px;top:666px" width="14" height="9" viewBox="0 0 14 9"><path d="M1 1l6 6 6-6" fill="none" stroke="#1a4a78" stroke-width="2.2"/></svg>
<svg class="a" style="left:514px;top:661px" width="18" height="18"><use href="#stks"/></svg>
<div class="t" style="left:538px;top:660px;color:#fff">weiranyiService = {WeiranyiService@796}</div>
<svg class="a" style="left:514px;top:693px" width="9" height="14"><use href="#cr"/></svg>
<svg class="a" style="left:542px;top:690px" width="21" height="21" viewBox="0 0 21 21"><circle cx="10.5" cy="10.5" r="10.5" fill="#f4c67f"/><text x="10.5" y="15.5" text-anchor="middle" font-family="Liberation Sans" font-size="15" fill="#5a4320">f</text></svg>
<div class="t" style="left:568px;top:690px;letter-spacing:0.25px"><span class="vn">weiranyiDao</span> = <span class="vg">{WeiranyiDao@797}</span></div>
<svg class="a" style="left:484px;top:723px" width="9" height="14"><use href="#cr"/></svg>
<svg class="a" style="left:514px;top:721px" width="18" height="18"><use href="#stk"/></svg>
<div class="t" style="left:538px;top:720px;letter-spacing:0.25px"><span class="vn">weiranyiDao</span> = <span class="vg">{WeiranyiDao@797}</span></div>
<!-- left stripe favorites / structure -->
<div class="t" style="left:8px;top:598px;transform:rotate(-90deg);transform-origin:0 0;font-size:16.5px"><u>2</u>: Favorites</div>
<svg class="a" style="left:9px;top:604px" width="19" height="19" viewBox="0 0 24 24"><path d="M12 1l3.2 7.2 7.8.7-5.9 5.2 1.8 7.7L12 17.8 5.1 21.8l1.8-7.7L1 8.9l7.8-.7z" fill="#6e6e6e"/></svg>
<div class="t" style="left:8px;top:749px;transform:rotate(-90deg);transform-origin:0 0;font-size:17.5px"><u>7</u>: Structure</div>
<svg class="a" style="left:11px;top:753px" width="16" height="15" viewBox="0 0 16 15"><g fill="#7a7a7a"><rect x="8" y="0" width="6" height="6"/><rect x="0" y="8" width="6" height="6"/><rect x="8" y="8" width="6" height="6"/></g></svg>

<!-- ===== BOTTOM BAR ===== -->
<div class="b" style="left:2px;top:788px;width:1595px;height:1px"></div>
<div class="a" style="left:1px;top:820px;width:1595px;height:2px;background:#9a9a9a"></div>


<!-- bottom tool bar -->
<div class="a" style="left:454px;top:789px;width:126px;height:32px;background:#bfbfbf"></div>
<svg class="a" style="left:50px;top:797px" width="17" height="16" viewBox="0 0 17 16"><rect width="17" height="16" fill="#6e6e6e"/><path d="M3 3.5l4 3-4 3" fill="none" stroke="#f2f2f2" stroke-width="1.6"/><path d="M8 11.5h6" stroke="#f2f2f2" stroke-width="1.6"/></svg>
<div class="t" style="left:75px;top:796px;font-size:17px">Terminal</div>
<svg class="a" style="left:170px;top:796px" width="20" height="19" viewBox="0 0 24 22"><path d="M1 8L8 1l5 3-7 7z" fill="#6e6e6e"/><path d="M8 8l14 13" stroke="#6e6e6e" stroke-width="4.5"/></svg>
<div class="t" style="left:196px;top:796px;font-size:17px">Build</div>
<svg class="a" style="left:262px;top:798px" width="19" height="16" viewBox="0 0 19 16"><path d="M18 0C12 1 2 2 1 11c0 2 1 4 3 5 1-3 4-7 9-9-4 3-6 6-7 9 9 0 12-8 12-16z" fill="#7a7a7a"/></svg>
<div class="t" style="left:288px;top:796px;font-size:17px">Spring</div>
<svg class="a" style="left:370px;top:799px" width="12" height="14" viewBox="0 0 12 14"><path d="M0 0l12 7-12 7z" fill="#6e6e6e"/></svg>
<div class="t" style="left:392px;top:796px;font-size:17px"><u>4</u>: Run</div>
<svg class="a" style="left:472px;top:796px" width="21" height="21" viewBox="0 0 21 21"><g fill="#6e6e6e"><rect x="4" y="5" width="10" height="12" rx="4"/><rect x="1" y="8" width="16" height="2"/><rect x="1" y="12" width="16" height="2"/><rect x="6" y="2" width="2" height="4"/><rect x="10" y="2" width="2" height="4"/></g><circle cx="16.5" cy="16.5" r="3.5" fill="#2fc33a" stroke="#bfbfbf" stroke-width="1"/></svg>
<div class="t" style="left:496px;top:796px;font-size:17px"><u>5</u>: Debug</div>
<svg class="a" style="left:598px;top:798px" width="16" height="14" viewBox="0 0 16 14"><g fill="#6e6e6e"><rect x="0" y="0" width="3" height="2.5"/><rect x="5" y="0" width="11" height="2.5"/><rect x="0" y="5.5" width="3" height="2.5"/><rect x="5" y="5.5" width="11" height="2.5"/><rect x="0" y="11" width="3" height="2.5"/><rect x="5" y="11" width="11" height="2.5"/></g></svg>
<div class="t" style="left:621px;top:796px;font-size:17px"><u>6</u>: TODO</div>
<svg class="a" style="left:1447px;top:796px" width="20" height="20" viewBox="0 0 20 20"><path d="M17.5 6.5A8.3 8.3 0 1 0 17.5 13.5" fill="none" stroke="#606060" stroke-width="2"/></svg>
<div class="t" style="left:1474px;top:796px;font-size:17px">Event Log</div>
<!-- status bar -->
<svg class="a" style="left:10px;top:828px" width="18" height="18" viewBox="0 0 18 18"><rect x="4.5" y=".5" width="13" height="13" fill="none" stroke="#6e6e6e"/><path d="M.5 4.5v13h13" fill="none" stroke="#6e6e6e"/></svg>
<div class="t" style="left:42px;top:825px;letter-spacing:0.34px">All files are up-to-date (moments ago)</div>
<div class="t" style="left:1234px;top:825px;font-size:18px">42:1</div>
<div class="t" style="left:1291px;top:825px;font-size:18px">LF</div>
<div class="t" style="left:1327px;top:825px;font-size:18px">UTF-8</div>
<div class="t" style="left:1398px;top:825px;font-size:18px">4 spaces</div>
<svg class="a" style="left:1488px;top:826px" width="14" height="19" viewBox="0 0 14 19"><rect x="0" y="8" width="14" height="11" fill="#6e6e6e"/><path d="M3 8V5a4 4 0 0 1 8 0v3" fill="none" stroke="#6e6e6e" stroke-width="2"/></svg>
<svg class="a" style="left:1524px;top:826px" width="20" height="20" viewBox="0 0 20 20"><path d="M5 6V2.5Q10 0 15 2.5V6h3v1.6H2V6z" fill="#6e6e6e"/><path d="M4.5 8.5h11v2.5a5.5 5.5 0 0 1-11 0z" fill="#fafafa" stroke="#6e6e6e" stroke-width="1.4"/><circle cx="8" cy="11" r=".9" fill="#6e6e6e"/><circle cx="12" cy="11" r=".9" fill="#6e6e6e"/><path d="M8 13.3q2 1.3 4 0" fill="none" stroke="#6e6e6e" stroke-width="1"/><path d="M2.5 20c.5-2.5 2.5-3.5 4.5-3.8l3 1.6 3-1.6c2 .3 4 1.3 4.5 3.8z" fill="#6e6e6e"/></svg>
<svg class="a" style="left:1557px;top:826px" width="26" height="24" viewBox="0 0 26 24"><path d="M5.5 16a5 5 0 0 1-.5-10A7 7 0 0 1 18 4.5 5.8 5.8 0 0 1 22 14l-6 2z" fill="#6e6e6e"/><path d="M9.5 6.8a3 3 0 1 1 4.5 2.6c-1 .6-1.5 1-1.5 2.4" fill="none" stroke="#f2f2f2" stroke-width="1.8"/><circle cx="12.5" cy="14" r="1.1" fill="#f2f2f2"/><circle cx="19" cy="18" r="6" fill="#f2f2f2"/><path fill="#6e6e6e" fill-rule="evenodd" d="M18 13h2l.3 1.4 1 .5 1.2-.8 1.4 1.4-.8 1.2.5 1 1.4.3v2l-1.4.3-.5 1 .8 1.2-1.4 1.4-1.2-.8-1 .5L20 24h-2l-.3-1.4-1-.5-1.2.8-1.4-1.4.8-1.2-.5-1L13 19v-2l1.4-.3.5-1-.8-1.2 1.4-1.4 1.2.8 1-.5zM19 16.3a1.7 1.7 0 1 0 0 3.4 1.7 1.7 0 0 0 0-3.4z"/></svg>
<!-- window right & bottom borders -->
<div class="a" style="left:1596px;top:0;width:1px;height:853px;background:#555"></div>
<div class="a" style="left:0;top:852px;width:1597px;height:1px;background:#555"></div>
<!-- watermark -->
<div class="a" style="left:1261px;top:759px;white-space:pre;font-size:46px;line-height:54px;font-weight:normal;color:#999;-webkit-text-stroke:1px #999">知乎 @亦蔚然</div>
<div class="a" style="left:1258px;top:756px;white-space:pre;font-size:46px;line-height:54px;font-weight:normal;color:rgba(255,255,255,0.9)">知乎 @亦蔚然</div>
<div class="a" style="left:1417px;top:818px;white-space:pre;font-size:28px;line-height:30px;font-weight:bold;color:#2ab3ad;transform:skewX(-6deg);letter-spacing:3px;-webkit-text-stroke:0.6px #2ab3ad">聚集网</div>
</body></html>
